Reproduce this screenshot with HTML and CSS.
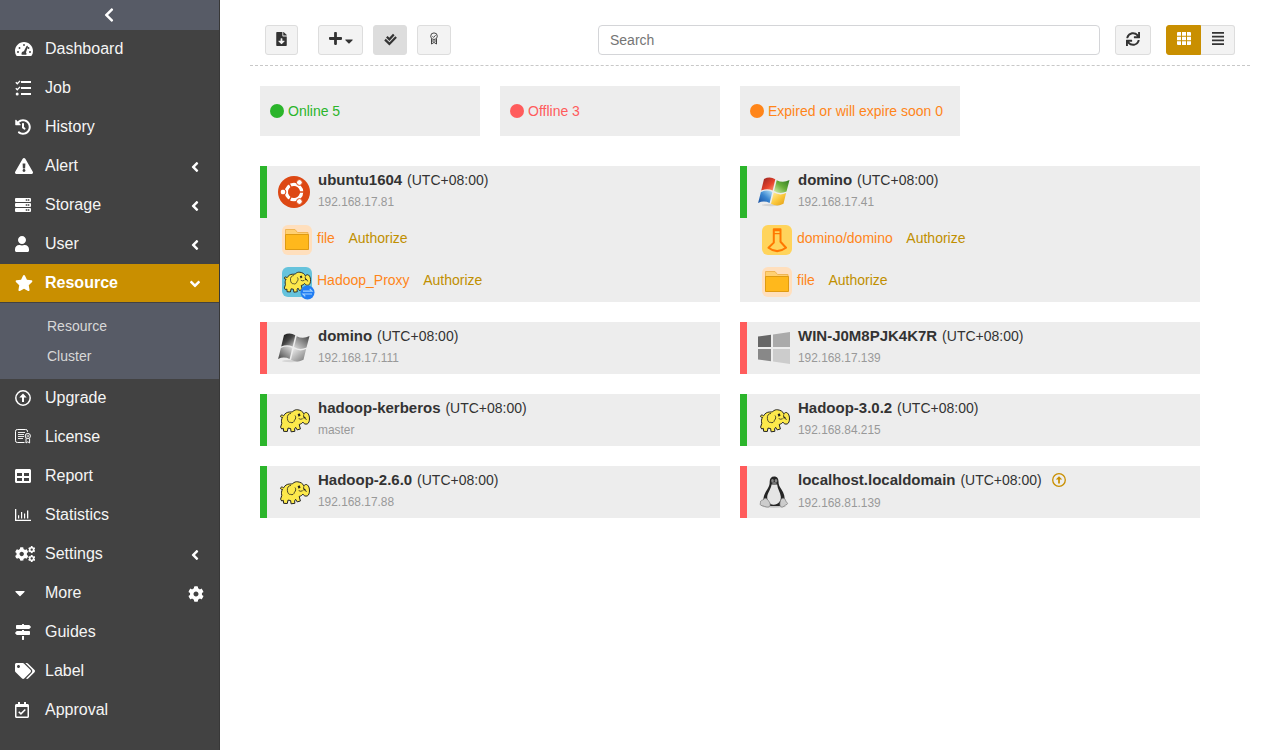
FILE: index.html
```html
<!DOCTYPE html>
<html lang="en">
<head>
<meta charset="utf-8">
<title>Resource</title>
<link rel="stylesheet" href="styles.css">
</head>
<body>
<svg class="sprite" width="0" height="0" aria-hidden="true">
  <defs>
    <linearGradient id="wr" x1="0" y1="0" x2="1" y2="1"><stop offset="0" stop-color="#8e2020"/><stop offset=".6" stop-color="#e8442c"/><stop offset="1" stop-color="#ffa27c"/></linearGradient>
    <linearGradient id="wg" x1="1" y1="0" x2="0" y2="1"><stop offset="0" stop-color="#2f7a22"/><stop offset=".5" stop-color="#69b03a"/><stop offset="1" stop-color="#d9efb1"/></linearGradient>
    <linearGradient id="wb" x1="0" y1="1" x2="1" y2="0"><stop offset="0" stop-color="#174ea0"/><stop offset=".5" stop-color="#3a86d0"/><stop offset="1" stop-color="#b6e4fa"/></linearGradient>
    <linearGradient id="wy" x1="1" y1="1" x2="0" y2="0"><stop offset="0" stop-color="#e09a12"/><stop offset=".5" stop-color="#fbc83c"/><stop offset="1" stop-color="#fff0a5"/></linearGradient>
    <linearGradient id="g1" x1="0" y1="0" x2="1" y2="1"><stop offset="0" stop-color="#111"/><stop offset=".5" stop-color="#444"/><stop offset="1" stop-color="#ccc"/></linearGradient>
    <linearGradient id="g2" x1="1" y1="0" x2="0" y2="1"><stop offset="0" stop-color="#444"/><stop offset="1" stop-color="#ddd"/></linearGradient>
    <linearGradient id="g3" x1="0" y1="1" x2="1" y2="0"><stop offset="0" stop-color="#444"/><stop offset="1" stop-color="#e4e4e4"/></linearGradient>
    <linearGradient id="g4" x1="1" y1="1" x2="0" y2="0"><stop offset="0" stop-color="#777"/><stop offset="1" stop-color="#f2f2f2"/></linearGradient>
  </defs>
  <symbol id="chevron-left" viewBox="0 0 320 512"><path d="M34.52 239.03L228.87 44.69c9.37-9.37 24.57-9.37 33.94 0l22.67 22.67c9.36 9.36 9.37 24.52.04 33.9L131.49 256l154.02 154.75c9.34 9.38 9.32 24.54-.04 33.9l-22.67 22.67c-9.37 9.37-24.57 9.37-33.94 0L34.52 272.97c-9.37-9.37-9.37-24.57 0-33.94z"/></symbol>
  <symbol id="angle-left" viewBox="0 0 256 512"><path d="M31.7 239l136-136c9.4-9.4 24.6-9.4 33.9 0l22.6 22.6c9.4 9.4 9.4 24.6 0 33.9L127.9 256l96.4 96.4c9.4 9.4 9.4 24.6 0 33.9L201.7 409c-9.4 9.4-24.6 9.4-33.9 0l-136-136c-9.5-9.4-9.5-24.6-.1-34z"/></symbol>
  <symbol id="angle-down" viewBox="0 0 320 512"><path d="M143 352.3L7 216.3c-9.4-9.4-9.4-24.6 0-33.9l22.6-22.6c9.4-9.4 24.6-9.4 33.9 0l96.4 96.4 96.4-96.4c9.4-9.4 24.6-9.4 33.9 0l22.6 22.6c9.4 9.4 9.4 24.6 0 33.9l-136 136c-9.2 9.4-24.4 9.4-33.8 0z"/></symbol>
  <symbol id="gauge" viewBox="0 0 576 512"><path fill-rule="evenodd" d="M288 32C129 32 0 161 0 320c0 52.800 14.250 102.260 39.060 144.800 5.610 9.620 16.300 15.200 27.440 15.200h443c11.140 0 21.830-5.580 27.440-15.200C561.750 422.260 576 372.800 576 320c0-159-129-288-288-288zM288 96a30 30 0 1 1-.1 60 30 30 0 0 1 .1-60zM96 384a32 32 0 1 1 .1-64 32 32 0 0 1-.1 64zM144 192a30 30 0 1 1-.1 60 30 30 0 0 1 .1-60zM396 151c13 4 19 17 15 30l-61 184c11 11 18 26 18 43 0 12-3 22-8 32H216c-5-10-8-20-8-32 0-43 34-77 76-80l82-162c4-12 17-19 30-15zM432 192a30 30 0 1 1-.1 60 30 30 0 0 1 .1-60zM480 320a32 32 0 1 1-.1 64 32 32 0 0 1 .1-64z"/></symbol>
  <symbol id="tasks" viewBox="0 0 16 16"><path d="M6 2h10M6 8h10M6 14h10" stroke="currentColor" stroke-width="2"/><path d="M.8 2.300l1.500 1.500L5 .9M.8 8.300l1.500 1.500L5 6.900" fill="none" stroke="currentColor" stroke-width="1.300"/><circle cx="2.200" cy="14" r="1.500"/></symbol>
  <symbol id="history" viewBox="0 0 512 512"><path d="M504 255.531c.253 136.640-111.180 248.372-247.820 248.468-59.015.042-113.223-20.530-155.822-54.911-11.077-8.940-11.905-25.541-1.839-35.607l11.267-11.267c8.609-8.609 22.353-9.551 31.891-1.984C173.062 425.135 212.781 440 256 440c101.705 0 184-82.311 184-184 0-101.705-82.311-184-184-184-48.814 0-93.149 18.969-126.068 49.932l50.754 50.754c10.080 10.080 2.941 27.314-11.313 27.314H24c-8.837 0-16-7.163-16-16V38.627c0-14.254 17.234-21.393 27.314-11.314l49.372 49.372C129.209 34.136 189.552 8 256 8c136.810 0 247.747 110.780 248 247.531zm-180.912 78.784l9.823-12.630c8.138-10.463 6.253-25.542-4.210-33.679L288 256.349V152c0-13.255-10.745-24-24-24h-16c-13.255 0-24 10.745-24 24v135.651l65.409 50.874c10.463 8.137 25.541 6.253 33.679-4.210z"/></symbol>
  <symbol id="alert" viewBox="0 0 576 512"><path d="M569.517 440.013C587.975 472.007 564.806 512 527.940 512H48.054c-36.937 0-59.999-40.055-41.577-71.987L246.423 23.985c18.467-32.009 64.720-31.951 83.154 0l239.940 416.028zM288 354c-25.405 0-46 20.595-46 46s20.595 46 46 46 46-20.595 46-46-20.595-46-46-46zm-43.673-165.346l7.418 136c.347 6.364 5.609 11.346 11.982 11.346h48.546c6.373 0 11.635-4.982 11.982-11.346l7.418-136c.375-6.874-5.098-12.654-11.982-12.654h-63.383c-6.884 0-12.356 5.780-11.981 12.654z"/></symbol>
  <symbol id="server" viewBox="0 0 512 512"><path fill-rule="evenodd" d="M32 32h448a32 32 0 0 1 32 32v64a32 32 0 0 1-32 32H32a32 32 0 0 1-32-32V64a32 32 0 0 1 32-32zM344 72v48h48V72zM410 72v48h48V72zM32 192h448a32 32 0 0 1 32 32v64a32 32 0 0 1-32 32H32a32 32 0 0 1-32-32v-64a32 32 0 0 1 32-32zM344 232v48h48v-48zM410 232v48h48v-48zM32 352h448a32 32 0 0 1 32 32v64a32 32 0 0 1-32 32H32a32 32 0 0 1-32-32v-64a32 32 0 0 1 32-32zM344 392v48h48v-48zM410 392v48h48v-48z"/></symbol>
  <symbol id="user" viewBox="0 0 448 512"><path d="M224 256c70.700 0 128-57.300 128-128S294.700 0 224 0 96 57.300 96 128s57.300 128 128 128zm89.600 32h-16.700c-22.200 10.200-46.900 16-72.900 16s-50.600-5.800-72.900-16h-16.700C60.200 288 0 348.200 0 422.400V464c0 26.500 21.500 48 48 48h352c26.500 0 48-21.500 48-48v-41.600c0-74.200-60.200-134.400-134.400-134.400z"/></symbol>
  <symbol id="star" viewBox="0 0 576 512"><path d="M259.300 17.800L194 150.200 47.900 171.500c-26.200 3.800-36.700 36.100-17.700 54.600l105.700 103-25 145.500c-4.500 26.300 23.200 46 46.400 33.700L288 439.600l130.700 68.700c23.200 12.200 50.900-7.400 46.400-33.700l-25-145.500 105.700-103c19-18.500 8.500-50.800-17.700-54.600L382 150.200 316.700 17.800c-11.700-23.600-45.600-23.900-57.400 0z"/></symbol>
  <symbol id="up-circle" viewBox="0 0 16 16"><circle cx="8" cy="8" r="7.200" fill="none" stroke="currentColor" stroke-width="1.500"/><path d="M8 3.600l3.700 3.900H9V12H7V7.500H4.300z"/></symbol>
  <symbol id="license" viewBox="0 0 16 16"><g fill="none" stroke="currentColor"><path d="M9.500 13.500H2.300A1.800 1.800 0 0 1 .5 11.700V2.300A1.800 1.800 0 0 1 2.300.5h8.400a1.800 1.800 0 0 1 1.800 1.700V3"/><path d="M3 3.500h7M3 5.500h6M3 7.500h6M3 9.500h5" stroke-width=".9"/><circle cx="12.800" cy="7" r="2.600"/><circle cx="12.800" cy="7" r=".9" stroke-width=".7"/><path d="M11 9.500V14l1.800-1.200 1.800 1.200V9.500"/></g></symbol>
  <symbol id="table" viewBox="0 0 512 512"><path d="M464 32H48C21.490 32 0 53.490 0 80v352c0 26.510 21.490 48 48 48h416c26.510 0 48-21.490 48-48V80c0-26.510-21.490-48-48-48zM224 416H64v-96h160v96zm0-160H64v-96h160v96zm224 160H288v-96h160v96zm0-160H288v-96h160v96z"/></symbol>
  <symbol id="stats" viewBox="0 0 16 16"><path d="M0 2h1.300v10.700H16V14H0zM3 8.200h1.200v3.300H3zM6 5h1.200v6.500H6zM9 6.500h1.200v5H9zM12 3.500h1.300v8H12z"/></symbol>
  <symbol id="cog" viewBox="0 0 512 512"><path d="M487.400 315.700l-42.600-24.600c4.300-23.200 4.300-47 0-70.200l42.600-24.600c4.900-2.800 7.100-8.600 5.500-14-11.100-35.600-30-67.800-54.700-94.600-3.800-4.100-10-5.100-14.800-2.300L380.800 110c-17.900-15.400-38.500-27.300-60.800-35.100V25.800c0-5.600-3.900-10.500-9.400-11.700-36.700-8.200-74.300-7.800-109.200 0-5.500 1.200-9.400 6.100-9.400 11.700V75c-22.200 7.900-42.800 19.800-60.800 35.100L88.700 85.500c-4.900-2.800-11-1.900-14.800 2.300-24.700 26.700-43.600 58.900-54.700 94.600-1.700 5.400.6 11.200 5.500 14L67.300 221c-4.300 23.200-4.300 47 0 70.200l-42.600 24.600c-4.900 2.800-7.100 8.600-5.500 14 11.100 35.600 30 67.800 54.700 94.600 3.800 4.100 10 5.100 14.800 2.300l42.600-24.600c17.900 15.400 38.500 27.300 60.800 35.100v49.200c0 5.600 3.900 10.500 9.400 11.700 36.700 8.200 74.300 7.800 109.200 0 5.500-1.200 9.400-6.100 9.400-11.700v-49.200c22.200-7.900 42.800-19.800 60.800-35.100l42.600 24.600c4.900 2.800 11 1.900 14.800-2.300 24.700-26.700 43.600-58.900 54.700-94.600 1.500-5.500-.7-11.300-5.600-14.100zM256 336c-44.100 0-80-35.900-80-80s35.900-80 80-80 80 35.900 80 80-35.900 80-80 80z"/></symbol>
  <symbol id="cogs" viewBox="0 0 20 16"><use href="#cog" x="-.3" y="1" width="14" height="14"/><use href="#cog" x="13" y="0" width="7.400" height="7.400"/><use href="#cog" x="13" y="8.800" width="7.400" height="7.400"/></symbol>
  <symbol id="caret-down" viewBox="0 0 320 512"><path d="M31.300 192h257.300c17.800 0 26.700 21.500 14.100 34.100L174.100 354.800c-7.800 7.800-20.500 7.800-28.300 0L17.200 226.100C4.600 213.500 13.500 192 31.300 192z"/></symbol>
  <symbol id="signs" viewBox="0 0 512 512"><path d="M507.310 84.690L464 41.370c-6-6-14.140-9.370-22.630-9.370H288V16c0-8.840-7.160-16-16-16h-32c-8.840 0-16 7.160-16 16v16H56c-13.250 0-24 10.750-24 24v80c0 13.250 10.750 24 24 24h385.370c8.490 0 16.620-3.370 22.630-9.370l43.310-43.310c6.250-6.260 6.250-16.380 0-22.630zM224 496c0 8.840 7.160 16 16 16h32c8.840 0 16-7.160 16-16V384h-64v112zm232-272H288v-32h-64v32H70.630c-8.490 0-16.620 3.370-22.630 9.370L4.690 276.690c-6.250 6.250-6.250 16.380 0 22.630L48 342.630c6 6 14.140 9.370 22.630 9.370H456c13.250 0 24-10.750 24-24v-80c0-13.250-10.750-24-24-24z"/></symbol>
  <symbol id="tags" viewBox="0 0 640 512"><path d="M497.941 225.941L286.059 14.059A48 48 0 0 0 252.118 0H48C21.490 0 0 21.490 0 48v204.118a48 48 0 0 0 14.059 33.941l211.882 211.882c18.744 18.745 49.136 18.746 67.882 0l204.118-204.118c18.745-18.745 18.745-49.137 0-67.882zM112 160c-26.510 0-48-21.490-48-48s21.490-48 48-48 48 21.490 48 48-21.490 48-48 48zm513.941 133.823L421.823 497.941c-18.745 18.745-49.137 18.745-67.882 0l-.36-.36L527.640 323.522c16.999-16.999 26.360-39.600 26.360-63.640s-9.362-46.641-26.360-63.640L331.397 0h48.721a48 48 0 0 1 33.941 14.059l211.882 211.882c18.745 18.745 18.745 49.137 0 67.882z"/></symbol>
  <symbol id="calendar" viewBox="0 0 448 512"><path d="M400 64h-48V12c0-6.627-5.373-12-12-12h-40c-6.627 0-12 5.373-12 12v52H160V12c0-6.627-5.373-12-12-12h-40c-6.627 0-12 5.373-12 12v52H48C21.490 64 0 85.490 0 112v352c0 26.510 21.490 48 48 48h352c26.510 0 48-21.490 48-48V112c0-26.510-21.490-48-48-48zm-6 400H54a6 6 0 0 1-6-6V160h352v298a6 6 0 0 1-6 6z"/><path d="M120 310l70 70 140-140" fill="none" stroke="currentColor" stroke-width="50"/></symbol>
  <symbol id="file-down" viewBox="0 0 384 512"><path d="M224 136V0H24C10.700 0 0 10.700 0 24v464c0 13.300 10.700 24 24 24h336c13.300 0 24-10.700 24-24V160H248c-13.200 0-24-10.800-24-24zm76.450 211.360l-96.420 95.700c-6.650 6.610-17.390 6.610-24.040 0l-96.420-95.700C73.420 337.290 80.540 320 94.820 320H160v-80c0-8.840 7.160-16 16-16h32c8.840 0 16 7.160 16 16v80h65.180c14.280 0 21.400 17.290 11.270 27.360zM377 105L279.100 7c-4.500-4.500-10.600-7-17-7H256v128h128v-6.100c0-6.300-2.500-12.400-7-16.900z"/></symbol>
  <symbol id="plus" viewBox="0 0 448 512"><path d="M416 208H272V64c0-17.670-14.330-32-32-32h-32c-17.670 0-32 14.330-32 32v144H32c-17.670 0-32 14.330-32 32v32c0 17.670 14.330 32 32 32h144v144c0 17.670 14.330 32 32 32h32c17.670 0 32-14.330 32-32V304h144c17.670 0 32-14.330 32-32v-32c0-17.670-14.330-32-32-32z"/></symbol>
  <symbol id="checks" viewBox="0 0 13 13"><path d="M2.800 3.800l2.600 2.500L9.800 1.400M1 6.600l4.400 4.300 6.700-7" fill="none" stroke="currentColor" stroke-width="2.200"/></symbol>
  <symbol id="award" viewBox="0 0 10 13"><g fill="none" stroke="currentColor" stroke-width=".9"><circle cx="5" cy="4.200" r="3.300"/><path d="M3.500 4.300l1.100 1.100 2-2.200M2.500 7v5L5 10.400 7.500 12V7M2.500 9h5"/></g></symbol>
  <symbol id="sync" viewBox="0 0 512 512"><path d="M440.650 12.570l4 82.770A247.160 247.160 0 0 0 255.830 8C134.730 8 33.910 94.920 12.290 209.820A12 12 0 0 0 24.090 224h49.050a12 12 0 0 0 11.670-9.260 175.910 175.910 0 0 1 317-56.940l-101.460-4.860a12 12 0 0 0-12.570 12v47.410a12 12 0 0 0 12 12H500a12 12 0 0 0 12-12V12.570A12 12 0 0 0 500 0h-47.370a12 12 0 0 0-11.980 12.570zM255.830 432a175.610 175.610 0 0 1-146-77.800l101.800 4.870a12 12 0 0 0 12.570-12v-47.400a12 12 0 0 0-12-12H12a12 12 0 0 0-12 12V500a12 12 0 0 0 12 12h47.350a12 12 0 0 0 12-12.600l-4.150-82.570A247.170 247.170 0 0 0 255.830 504c121.110 0 221.930-86.920 243.550-201.820a12 12 0 0 0-11.800-14.180h-49.050a12 12 0 0 0-11.670 9.260A175.860 175.860 0 0 1 255.830 432z"/></symbol>
  <symbol id="grid" viewBox="0 0 14 13"><path d="M.7 0H4v3.700H0V.7zM5 0h4v3.700H5zM10 0h3.300l.7.700v3H10zM0 4.700h4v3.600H0zM5 4.700h4v3.600H5zM10 4.700h4v3.600h-4zM0 9.300h4V13H.7L0 12.300zM5 9.300h4V13H5zM10 9.300h4v3l-.7.700H10z"/></symbol>
  <symbol id="list" viewBox="0 0 12 13"><path d="M0 0h12v1.800H0zM0 3.700h12v1.800H0zM0 7.500h12v1.800H0zM0 11.200h12V13H0z"/></symbol>

  <symbol id="ubuntu" viewBox="0 0 32 32"><circle cx="16" cy="16" r="16" fill="#dd4814"/><circle cx="16" cy="16" r="7.600" fill="none" stroke="#fff" stroke-width="3.400"/><g stroke="#dd4814" stroke-width="1.300"><path d="M16 16h11M16 16l-5.500-9.600M16 16l-5.500 9.600"/></g><g fill="#fff" stroke="#dd4814" stroke-width="1"><circle cx="5" cy="16" r="2.900"/><circle cx="21.400" cy="6.500" r="2.900"/><circle cx="21.400" cy="25.500" r="2.900"/></g><circle cx="16" cy="16" r="5.800" fill="#dd4814"/></symbol>
  <symbol id="win7" viewBox="0 0 32 32"><ellipse cx="13" cy="29" rx="9" ry="1.200" fill="#bbb" opacity=".5"/><path fill="url(#wr)" d="M6 3Q12 0 17.300 3.300L14.700 14.400Q9 12 3.200 14.500z"/><path fill="url(#wg)" d="M18.700 4.200Q25 7.500 31.500 4L28.500 15.500Q22 18.500 16 15z"/><path fill="url(#wb)" d="M2.900 16Q9 13.300 14.300 15.900L11.600 27Q6 24.300.1 26.900z"/><path fill="url(#wy)" d="M15.700 16.600Q22 20 28.100 17L25.500 27.800Q19 31 13 27.700z"/></symbol>
  <symbol id="win7-gray" viewBox="0 0 32 32"><ellipse cx="13" cy="29" rx="9" ry="1.200" fill="#bbb" opacity=".5"/><path fill="url(#g1)" d="M6 3Q12 0 17.300 3.300L14.700 14.400Q9 12 3.200 14.500z"/><path fill="url(#g2)" d="M18.700 4.200Q25 7.500 31.500 4L28.500 15.500Q22 18.500 16 15z"/><path fill="url(#g3)" d="M2.900 16Q9 13.300 14.300 15.900L11.600 27Q6 24.300.1 26.900z"/><path fill="url(#g4)" d="M15.700 16.600Q22 20 28.100 17L25.500 27.800Q19 31 13 27.700z"/></symbol>
  <symbol id="win10" viewBox="0 0 32 32"><path fill="#666" d="M0 4.500l13-1.800v12.400H0z"/><path fill="#aaa" d="M15 2.400L32 0v15.100H15z"/><path fill="#888" d="M0 17h13v12.200L0 27.500z"/><path fill="#ccc" d="M15 17h17v15l-17-2.500z"/></symbol>
  <symbol id="elephant" viewBox="0 0 32 32"><g stroke="#222" stroke-linejoin="round" fill="#fce94b"><path stroke-width="1" d="M4.500 13.300C2.800 13.800 2 12.300 3 11.300c.9-.7 2 0 2.500.6C7 9.300 9 8.100 11.500 8c1.300-.1 2.200.2 3.200-.4C16.300 6 18 5.500 19.800 5.800c2.800.4 5 1.600 6 4 .9-1.300 2.300-1.600 3.400-1 1.900 1.300 2.600 4.400 2.200 7.400-.4 2.700-1.600 4-3.400 3.900-1.400 0-2.500-.8-3.100-2-.9 1.300-2.100 2-3.700 2.300l1.200 4.600-3.200.9-1.600-2.600-1 1.700 .3 2.300-3.800.5-.5-3.300-2.600-.4-.7 3.400-3.700-.2-.2-2.900-1.700.6-1.100-1.900 1.200-3.700c-.6-2.300-.4-4.200.7-6.100z"/><path d="M13 9.400c-2.700.3-4 2.300-3.600 5.200.3 2.500 1.300 4.100 3.200 3.800 1.900.9 3.400-.2 3.900-2.200 1.400-1.400 1.600-3.200.5-4.700" stroke-width=".8"/><path d="M25.900 10.300c-.8 1.400-.1 3.100 1.600 4l.9 1.600" fill="none" stroke-width=".9"/></g><path d="M19.600 10.200l1.900-.9 1.100 2.100-2 1.300zM25.300 12l2.600 1.800-2.200.9z" fill="#222"/><path d="M20.700 14.600q2 1.300 4 .1" stroke="#222" stroke-width=".8" fill="none"/></symbol>
  <symbol id="tux" viewBox="0 0 32 32"><ellipse cx="16" cy="30.500" rx="12" ry="1.200" fill="#999" opacity=".5"/><path d="M16.200.5c3.100 0 4.300 2.200 4.300 5.100 0 3.500.8 4.600 3 8 2.400 3.700 3.800 7.800 3 12.400L22 30H10l-4.500-5C5 20.500 7.500 16.200 9.500 13c2-3.200 2.200-4.800 2.200-7.500 0-2.900 1.500-5 4.500-5z" fill="#252525"/><path d="M13.500 8.500c-.2 4-4 8.300-4.300 12.300-.2 4 2 7.700 6.300 7.900 4.700.1 7.800-3.400 7.300-8.100-.4-4-3.500-8.200-3.600-12z" fill="#e5e5e5"/><ellipse cx="14.500" cy="4.700" rx="1.300" ry="1.700" fill="#888"/><ellipse cx="18" cy="4.700" rx="1.400" ry="1.700" fill="#888"/><path d="M13.200 6.800q3-1.700 6 .1l-3 2z" fill="#777"/><g fill="#ccc" stroke="#777" stroke-width=".7"><path d="M6.500 22.500c1.500-.8 3 .6 4.700 3.300 1.800 2.800 1 5.200-1.400 5.300-2.300.1-4.200-1.300-7-1.800-.9-.3-.5-2-.1-4.200.7-1.300 2.900-.8 3.800-2.600z"/><path d="M25.500 22.300c-1.900-.3-3 1.300-3.400 3.800-.6 3.400.2 5.600 2.800 4.800 1.400-.7 2.100-1.700 4.200-2.600.8-.5.4-1.200-.8-2.500-.9-1-.7-3.300-2.800-3.500z"/></g></symbol>
  <symbol id="folder" viewBox="0 0 30 30"><rect width="30" height="30" rx="6" fill="#ffdfbd"/><path d="M3.500 10V4.500H13l2.500 3H26V10" fill="#ffd072" stroke="#f0b553"/><path d="M3.500 9.500h23v15h-23z" fill="#ffb81c" stroke="#df9b12"/></symbol>
  <symbol id="flask" viewBox="0 0 30 30"><rect width="30" height="30" rx="6" fill="#ffd45c"/><g fill="none" stroke="#ff7800"><path d="M11.800 4.200h6.700v12.600l5.500 6Q15 29.500 6.500 22.800l5.300-5.200z" stroke-linejoin="round" stroke-width="2"/><path d="M12 5.700h6.500M12 8.700h6.500" stroke-width="1.200"/></g></symbol>
  <symbol id="hadoop-proxy" viewBox="0 0 33 33"><rect width="30" height="30" rx="6" fill="#66c3dc"/><use href="#elephant" x="0" y="0" width="29" height="29"/><circle cx="25.500" cy="25.500" r="7" fill="#217df3"/><path d="M21 24.200h9l-2.300-2.300M30 27h-9l2.300 2.300" fill="none" stroke="#9fd1ff" stroke-width="1.200"/></symbol>
</svg>
<div class="layout">
  <nav class="sidebar">
    <div class="collapse"><svg width="10" height="16"><use href="#chevron-left"/></svg></div>
    <a class="item"><span class="ico"><svg width="18" height="16"><use href="#gauge"/></svg></span>Dashboard</a>
    <a class="item"><span class="ico"><svg width="16" height="16"><use href="#tasks"/></svg></span>Job</a>
    <a class="item"><span class="ico"><svg width="16" height="16"><use href="#history"/></svg></span>History</a>
    <a class="item"><span class="ico"><svg width="18" height="16"><use href="#alert"/></svg></span>Alert<svg class="arrow" width="10" height="16"><use href="#angle-left"/></svg></a>
    <a class="item"><span class="ico"><svg width="16" height="16"><use href="#server"/></svg></span>Storage<svg class="arrow" width="10" height="16"><use href="#angle-left"/></svg></a>
    <a class="item"><span class="ico"><svg width="14" height="16"><use href="#user"/></svg></span>User<svg class="arrow" width="10" height="16"><use href="#angle-left"/></svg></a>
    <a class="item active"><span class="ico"><svg width="18" height="16"><use href="#star"/></svg></span>Resource<svg class="arrow" width="10" height="16"><use href="#angle-down"/></svg></a>
    <div class="submenu"><a>Resource</a><a>Cluster</a></div>
    <a class="item"><span class="ico"><svg width="16" height="16"><use href="#up-circle"/></svg></span>Upgrade</a>
    <a class="item"><span class="ico"><svg width="16" height="16"><use href="#license"/></svg></span>License</a>
    <a class="item"><span class="ico"><svg width="16" height="16"><use href="#table"/></svg></span>Report</a>
    <a class="item"><span class="ico"><svg width="16" height="16"><use href="#stats"/></svg></span>Statistics</a>
    <a class="item"><span class="ico"><svg width="20" height="16"><use href="#cogs"/></svg></span>Settings<svg class="arrow" width="10" height="16"><use href="#angle-left"/></svg></a>
    <a class="item"><span class="ico"><svg width="10" height="16"><use href="#caret-down"/></svg></span>More<svg class="arrow gear" width="16" height="16"><use href="#cog"/></svg></a>
    <a class="item"><span class="ico"><svg width="16" height="16"><use href="#signs"/></svg></span>Guides</a>
    <a class="item"><span class="ico"><svg width="20" height="16"><use href="#tags"/></svg></span>Label</a>
    <a class="item"><span class="ico"><svg width="14" height="16"><use href="#calendar"/></svg></span>Approval</a>
  </nav>
  <main class="main">
    <header class="toolbar">
      <button class="btn download"><svg width="11" height="14"><use href="#file-down"/></svg></button>
      <button class="btn add"><svg width="13" height="15"><use href="#plus"/></svg><svg width="8" height="14" class="caret"><use href="#caret-down"/></svg></button>
      <button class="btn select pressed"><svg width="13" height="13"><use href="#checks"/></svg></button>
      <button class="btn cert"><svg width="10" height="13"><use href="#award"/></svg></button>
      <input class="search" type="text" placeholder="Search">
      <button class="btn refresh"><svg width="14" height="14"><use href="#sync"/></svg></button>
      <div class="views">
        <button class="btn view-grid"><svg width="14" height="13"><use href="#grid"/></svg></button>
        <button class="btn view-list"><svg width="12" height="13"><use href="#list"/></svg></button>
      </div>
    </header>
    <section class="summary">
      <div class="stat online"><i class="dot"></i>Online 5</div>
      <div class="stat offline"><i class="dot"></i>Offline 3</div>
      <div class="stat expired"><i class="dot"></i>Expired or will expire soon 0</div>
    </section>
    <section class="cards">
      <article class="card">
        <div class="host up"><svg class="os" width="32" height="32"><use href="#ubuntu"/></svg><div><div class="name"><b>ubuntu1604</b> (UTC+08:00)</div><div class="ip">192.168.17.81</div></div></div>
        <div class="res"><svg width="30" height="30"><use href="#folder"/></svg><a class="label">file</a><a class="auth">Authorize</a></div>
        <div class="res"><svg class="proxy" width="33" height="33"><use href="#hadoop-proxy"/></svg><a class="label">Hadoop_Proxy</a><a class="auth">Authorize</a></div>
      </article>
      <article class="card">
        <div class="host up"><svg class="os" width="32" height="32"><use href="#win7"/></svg><div><div class="name"><b>domino</b> (UTC+08:00)</div><div class="ip">192.168.17.41</div></div></div>
        <div class="res"><svg width="30" height="30"><use href="#flask"/></svg><a class="label">domino/domino</a><a class="auth">Authorize</a></div>
        <div class="res"><svg width="30" height="30"><use href="#folder"/></svg><a class="label">file</a><a class="auth">Authorize</a></div>
      </article>
      <article class="card"><div class="host down"><svg class="os" width="32" height="32"><use href="#win7-gray"/></svg><div><div class="name"><b>domino</b> (UTC+08:00)</div><div class="ip">192.168.17.111</div></div></div></article>
      <article class="card"><div class="host down"><svg class="os" width="32" height="32"><use href="#win10"/></svg><div><div class="name"><b>WIN-J0M8PJK4K7R</b> (UTC+08:00)</div><div class="ip">192.168.17.139</div></div></div></article>
      <article class="card"><div class="host up"><svg class="os" width="32" height="32"><use href="#elephant"/></svg><div><div class="name"><b>hadoop-kerberos</b> (UTC+08:00)</div><div class="ip">master</div></div></div></article>
      <article class="card"><div class="host up"><svg class="os" width="32" height="32"><use href="#elephant"/></svg><div><div class="name"><b>Hadoop-3.0.2</b> (UTC+08:00)</div><div class="ip">192.168.84.215</div></div></div></article>
      <article class="card"><div class="host up"><svg class="os" width="32" height="32"><use href="#elephant"/></svg><div><div class="name"><b>Hadoop-2.6.0</b> (UTC+08:00)</div><div class="ip">192.168.17.88</div></div></div></article>
      <article class="card"><div class="host down"><svg class="os" width="32" height="32"><use href="#tux"/></svg><div><div class="name"><b>localhost.localdomain</b> (UTC+08:00)<svg class="upgrade" width="14" height="14"><use href="#up-circle"/></svg></div><div class="ip low">192.168.81.139</div></div></div></article>
    </section>
  </main>
</div>
</body>
</html>
```
FILE: styles.css
```css
* { box-sizing: border-box; }
body {
  margin: 0;
  background: #fff;
  color: #333;
  font: 14px/20px "Liberation Sans", Arial, sans-serif;
}
svg { display: block; flex: none; fill: currentColor; }
.sprite { position: absolute; }
.layout { display: flex; height: 750px; overflow: hidden; }

.sidebar {
  width: 220px;
  flex: none;
  background: #424242;
  border-right: 1px solid #383838;
  color: #fff;
}
.collapse {
  height: 30px;
  padding-right: 1px;
  background: #575b66;
  display: flex;
  align-items: center;
  justify-content: center;
}
.item {
  display: flex;
  align-items: center;
  height: 39px;
  padding: 0 19px 2px 15px;
  font-size: 16px;
  line-height: 24px;
  color: #f5f5f5;
}
.ico { width: 30px; padding-top: 1px; color: #fff; }
.arrow { margin: 3px 0 0 auto; color: #fff; }
.gear { margin-right: -4px; }
.active {
  background: #c98f00;
  border-bottom: 1px solid #424242;
  padding-bottom: 1px;
  color: #fff;
  font-weight: bold;
}
.submenu {
  height: 76px;
  padding: 8px 0 0 47px;
  background: #575b66;
}
.submenu a { display: block; line-height: 30px; color: #d8d8d8; }

.main { flex: 1; padding: 0 30px; }
.toolbar {
  display: flex;
  height: 66px;
  padding: 25px 15px 0;
  border-bottom: 1px dashed #c8c8c8;
}
.btn {
  display: flex;
  align-items: center;
  justify-content: center;
  height: 30px;
  padding: 0 0 2px;
  background: #f3f3f3;
  border: 1px solid #ddd;
  border-radius: 3px;
  color: #333;
}
.download { width: 33px; margin-right: 20px; }
.add { width: 45px; margin-right: 10px; padding-bottom: 3px; gap: 3px; }
.caret { margin-top: 4px; }
.select { width: 34px; margin-right: 10px; }
.pressed { background: #ddd; }
.cert { width: 34px; padding-bottom: 4px; }
.search {
  width: 502px;
  height: 30px;
  margin: 0 15px 0 auto;
  padding: 0 11px;
  border: 1px solid #d4d5d8;
  border-radius: 4px;
  font: 14px "Liberation Sans", Arial, sans-serif;
}
.search::placeholder { color: #757575; }
.refresh { width: 36px; margin-right: 15px; }
.views { display: flex; }
.view-grid { width: 35px; padding-bottom: 3px; background: #c98f00; border-color: #c98f00; color: #fff; border-radius: 3px 0 0 3px; }
.view-list { width: 34px; padding-bottom: 3px; border-left: 0; border-radius: 0 3px 3px 0; }

.summary { display: flex; gap: 20px; padding: 20px 10px 30px; }
.stat {
  display: flex;
  align-items: center;
  width: 220px;
  height: 50px;
  padding: 0 10px;
  background: #ededed;
}
.dot { width: 14px; height: 14px; margin-right: 4px; border-radius: 50%; background: currentColor; }
.online { color: #2bb52b; }
.offline { color: #ff5c5c; }
.expired { color: #ff8519; }

.cards { display: grid; grid-template-columns: 460px 460px; gap: 20px; padding: 0 10px; }
.card { background: #ededed; }
.host {
  display: flex;
  height: 52px;
  padding: 4px 0 0 11px;
  border-left: 7px solid;
}
.up { border-color: #2bb52b; }
.down { border-color: #ff5c5c; }
.os { margin: 6px 8px 0 0; }
.name { display: flex; align-items: center; white-space: pre; color: #333; }
.name b { font-size: 15px; margin-right: 1px; }
.ip { margin-top: 2px; font-size: 11.9px; color: #999; }
.low { margin-top: 3px; }
.upgrade { margin-left: 10px; color: #c98f00; }
.res { display: flex; height: 42px; padding: 7px 0 0 22px; }
.label { margin: 3px 13.6px 0 5px; color: #ff8519; }
.proxy { margin-right: -3px; }
.auth { margin-top: 3px; color: #c08f00; }
```
